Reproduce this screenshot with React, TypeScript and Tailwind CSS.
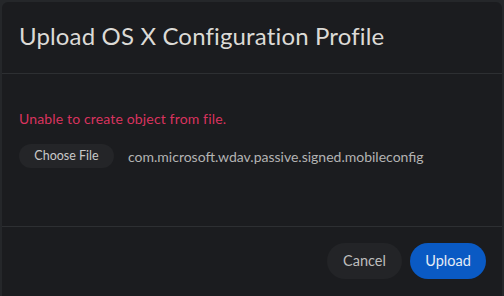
export default function App() {
  return (
    <div className="w-[504px] h-[296px] bg-[#25272a] overflow-hidden pt-[2px] px-[2px] font-['Lato',sans-serif]">
      <div className="h-[310px] bg-[#1b1c1f] rounded-t-[6px] flex flex-col">
        <div className="h-[72px] border-b border-[#2d2f32] flex items-center px-[17px] pb-[3px]">
          <h1 className="text-[24px] text-[#dcdad6] leading-none tracking-[0.15px]">Upload OS X Configuration Profile</h1>
        </div>
        <div className="h-[153px] border-b border-[#2d2f32] px-[17px] pt-[36px]">
          <p className="text-[14px] text-[#d9335e] leading-[18px] tracking-[0.15px]">Unable to create object from file.</p>
          <div className="flex items-center mt-[16px] gap-[14px]">
            <button className="h-[24px] w-[95px] rounded-full bg-[#242528] text-[12.5px] text-[#c9c9c9]">
              Choose File
            </button>
            <span className="text-[14px] text-[#b3b3b3]">com.microsoft.wdav.passive.signed.mobileconfig</span>
          </div>
        </div>
        <div className="flex justify-end gap-[8px] pr-[16px] pt-[16px]">
          <button className="h-[36px] w-[75px] rounded-full bg-[#232427] text-[14.5px] text-[#bdbdbd]">Cancel</button>
          <button className="h-[36px] w-[76px] rounded-full bg-[#0a5ac4] text-[14.5px] text-[#e6ecf5]">Upload</button>
        </div>
      </div>
    </div>
  );
}
